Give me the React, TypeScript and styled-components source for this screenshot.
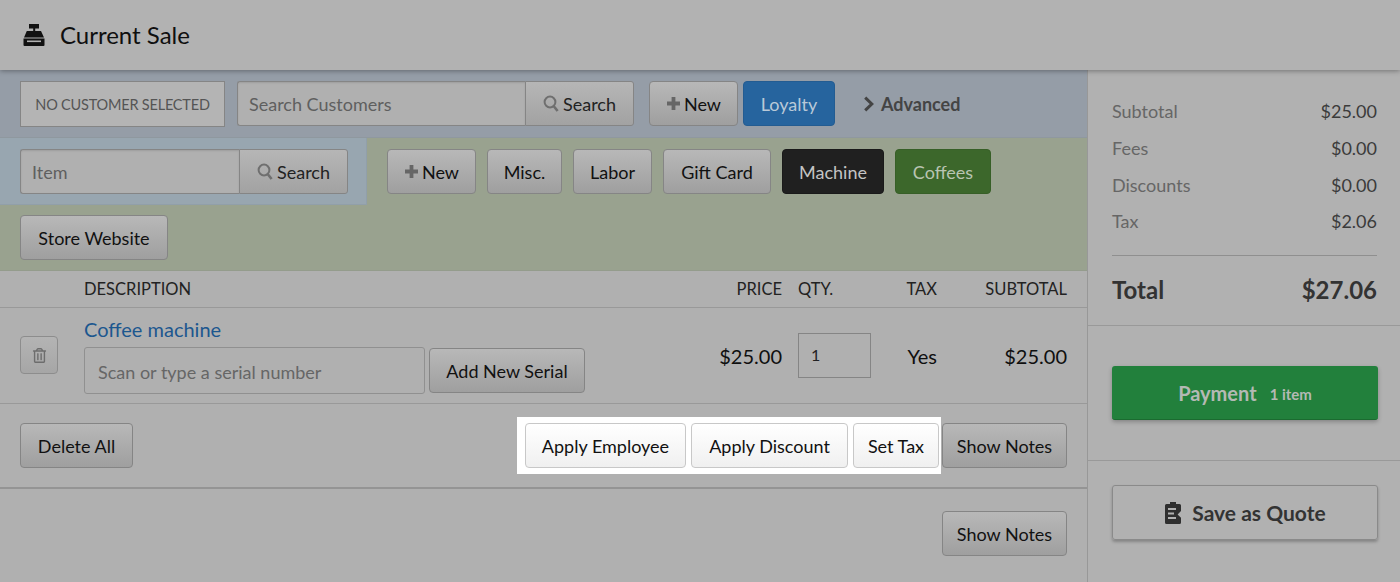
import { createGlobalStyle, css } from "styled-components";
import styled from "styled-components";
import { FaRegTrashAlt } from "react-icons/fa";

const GlobalStyle = createGlobalStyle`
    html, body {
        margin: 0;
        padding: 0;
        background: #b0b0b0;
    }
    body {
        font-family: Lato, "Liberation Sans", sans-serif;
        color: #111;
        overflow: hidden;
    }
    * {
        box-sizing: border-box;
    }
`;

const Page = styled.div`
    width: 1400px;
    height: 582px;
    display: flex;
    flex-direction: column;
    background: #b0b0b0;
    overflow: hidden;
`;

const Header = styled.header`
    position: relative;
    z-index: 2;
    height: 70px;
    flex: none;
    display: flex;
    align-items: center;
    gap: 14px;
    padding: 0 22px 1px;
    background: #b2b2b2;
    box-shadow: 0 1px 5px rgba(0, 0, 0, 0.35);
`;

const Title = styled.h1`
    margin: 0;
    font-size: 24px;
    font-weight: 400;
    color: #0f0f0f;
`;

const Body = styled.div`
    flex: 1;
    display: flex;
    min-height: 0;
`;

const Main = styled.main`
    width: 1088px;
    flex: none;
    border-right: 1px solid #989898;
`;

const CustomerBar = styled.div`
    height: 68px;
    display: flex;
    align-items: flex-start;
    padding: 11px 20px 0;
    background: #959da7;
    border-bottom: 1px solid #8f989f;
`;

const NoCustomer = styled.div`
    width: 205px;
    height: 46px;
    margin-right: 12px;
    display: flex;
    align-items: center;
    justify-content: center;
    font-size: 14.5px;
    color: #555;
    background: #b4b4b4;
    border: 1px solid #858585;
    letter-spacing: -0.2px;
`;

const SearchGroup = styled.div<{ $width: number }>`
    width: ${(p) => p.$width}px;
    height: 45px;
    flex: none;
    display: flex;
`;

const GroupInput = styled.div`
    flex: 1;
    display: flex;
    align-items: center;
    padding-left: 11px;
    font-size: 18px;
    color: #5f5f5f;
    background: #b0b0b0;
    border: 1px solid #858585;
    border-right: 0;
    border-radius: 3px 0 0 3px;
    box-shadow: inset 0 1px 2px rgba(0, 0, 0, 0.1);
`;

const GroupButton = styled.div`
    width: 109px;
    flex: none;
    display: flex;
    align-items: center;
    justify-content: center;
    gap: 4px;
    font-size: 18px;
    color: #222;
    background: linear-gradient(#b6b6b6, #a2a2a2);
    border: 1px solid #858585;
    border-radius: 0 3px 3px 0;
`;

const toneStyles = {
    plain: css`
        color: #111;
        background: linear-gradient(#b8b8b8, #9f9f9f);
        border-color: #858585;
    `,
    light: css`
        color: #111;
        background: linear-gradient(#fff, #f0f0f0);
        border-color: #c8c8c8;
    `,
    blue: css`
        color: #b9c9d8;
        background: #26649e;
        border-color: #235c92;
    `,
    black: css`
        color: #c4c4c4;
        background: #202020;
        border-color: #1a1a1a;
    `,
    green: css`
        color: #b9c4b2;
        background: #3c672b;
        border-color: #375f27;
    `,
};

const Button = styled.div<{
    $width: number;
    $tone?: keyof typeof toneStyles;
    $left?: number;
}>`
    width: ${(p) => p.$width}px;
    height: 45px;
    flex: none;
    margin-left: ${(p) => p.$left ?? 0}px;
    display: flex;
    align-items: center;
    justify-content: center;
    gap: 3px;
    font-size: 18px;
    border: 1px solid;
    border-radius: 4px;
    ${(p) => toneStyles[p.$tone ?? "plain"]}
`;

const Advanced = styled.div`
    height: 45px;
    margin-left: 28px;
    display: flex;
    align-items: center;
    gap: 6px;
    font-size: 18px;
    font-weight: 700;
    color: #444;
`;

const ItemArea = styled.div`
    height: 133px;
    background: #99a28f;
    border-bottom: 1px solid #949c8c;
`;

const ItemRow = styled.div`
    display: flex;
    align-items: flex-start;
`;

const ItemSearch = styled.div`
    width: 367px;
    height: 67px;
    flex: none;
    padding: 11px 19px 0 20px;
    background: #98a6b0;
    border-right: 1px solid #919fa9;
    border-bottom: 1px solid #919fa9;
`;

const ItemButtons = styled.div`
    display: flex;
    gap: 11px;
    padding: 11px 0 0 20px;
`;

const ExtraRow = styled.div`
    padding: 10px 20px 0;
`;

const tableColumns = css`
    display: grid;
    grid-template-columns: 64px 598px 100px 113px 42px 130px;
    padding: 0 20px;
`;

const TableHead = styled.div`
    ${tableColumns}
    height: 37px;
    align-items: center;
    font-size: 16.5px;
    color: #222;
    border-bottom: 1px solid #999;
`;

const ColDescription = styled.div`
    grid-column: 2;
`;

const ColRight = styled.div`
    text-align: right;
`;

const ColQty = styled.div`
    padding-left: 16px;
`;

const TableRow = styled.div`
    ${tableColumns}
    height: 96px;
    align-items: center;
    font-size: 20px;
    color: #0f0f0f;
    border-bottom: 1px solid #999;
`;

const TrashButton = styled.div`
    width: 38px;
    height: 38px;
    margin-top: -1px;
    display: flex;
    align-items: center;
    justify-content: center;
    color: #6d6d6d;
    font-size: 15px;
    background: linear-gradient(#b4b4b4, #a6a6a6);
    border: 1px solid #8d8d8d;
    border-radius: 4px;
`;

const ItemName = styled.a`
    display: block;
    margin-bottom: 6px;
    font-size: 20px;
    line-height: 24px;
    color: #1c578f;
`;

const SerialRow = styled.div`
    display: flex;
    align-items: center;
    gap: 4px;
`;

const SerialInput = styled.div`
    width: 341px;
    height: 47px;
    display: flex;
    align-items: center;
    padding: 3px 0 0 13px;
    font-size: 18px;
    color: #666;
    background: #b0b0b0;
    border: 1px solid #909090;
    border-radius: 3px;
`;

const QtyInput = styled.div`
    width: 73px;
    height: 45px;
    margin-left: 16px;
    display: flex;
    align-items: center;
    padding: 0 0 2px 12px;
    font-size: 16px;
    color: #222;
    border: 1px solid #858585;
`;

const Actions = styled.div`
    height: 85px;
    display: flex;
    align-items: center;
    justify-content: space-between;
    padding: 0 20px;
    border-bottom: 2px solid #949494;
`;

const ActionsRight = styled.div`
    display: flex;
    align-items: center;
`;

const Highlight = styled.div`
    display: flex;
    gap: 5px;
    padding: 6px 2px 6px 8px;
    margin-right: 1px;
    background: #fff;
`;

const NotesRow = styled.div`
    display: flex;
    justify-content: flex-end;
    padding: 22px 20px 0;
`;

const Sidebar = styled.aside`
    flex: 1;
    display: flex;
    flex-direction: column;
    background: #b1b1b1;
`;

const Summary = styled.section`
    height: 256px;
    flex: none;
    padding: 23px 23px 0 24px;
    border-bottom: 1px solid #999;
`;

const SummaryRow = styled.div`
    height: 36.7px;
    display: flex;
    align-items: center;
    justify-content: space-between;
    font-size: 18px;
    color: #666;
`;

const SummaryValue = styled.span`
    color: #3b3b3b;
`;

const Rule = styled.hr`
    margin: 15px 0 16px;
    border: 0;
    border-top: 1px solid #8f8f8f;
`;

const TotalRow = styled.div`
    display: flex;
    justify-content: space-between;
    font-size: 24px;
    line-height: 36px;
    font-weight: 700;
    color: #333;
`;

const PaymentSection = styled.section`
    height: 135px;
    flex: none;
    padding: 40px 22px 0 24px;
    border-bottom: 1px solid #999;
`;

const PaymentButton = styled.div`
    height: 54px;
    display: flex;
    align-items: center;
    justify-content: center;
    gap: 13px;
    font-size: 20px;
    font-weight: 700;
    color: #b4b9b4;
    background: #22803c;
    border-bottom: 1px solid #1b6b30;
    border-radius: 3px;
    box-shadow: 0 2px 4px rgba(0, 0, 0, 0.25);
`;

const PaymentCount = styled.span`
    padding-top: 3px;
    font-size: 15px;
`;

const QuoteSection = styled.section`
    padding: 24px 22px 0 24px;
`;

const QuoteButton = styled.div`
    height: 55px;
    display: flex;
    align-items: center;
    justify-content: center;
    gap: 10px;
    font-size: 21px;
    font-weight: 700;
    color: #333;
    border: 1px solid #8a8a8a;
    border-radius: 3px;
    box-shadow: 0 2px 3px rgba(0, 0, 0, 0.25);
`;

const SearchIcon = () => (
    <svg width="16" height="17" viewBox="0 0 16 17" fill="none" stroke="#6f6f6f">
        <circle cx="7" cy="7" r="5.4" strokeWidth="2" />
        <path d="M10.8 11.2 14.6 16" strokeWidth="2.6" />
    </svg>
);

const PlusIcon = () => (
    <svg width="15" height="15" viewBox="0 0 15 15" fill="#666">
        <path d="M5.6 1h3.8v4.6H14v3.8H9.4V14H5.6V9.4H1V5.6h4.6z" />
    </svg>
);

const ChevronIcon = () => (
    <svg width="12" height="16" viewBox="0 0 12 16" fill="none" stroke="#444">
        <path d="M2.2 1.6 8.8 8l-6.6 6.4" strokeWidth="3" />
    </svg>
);

const RegisterIcon = () => (
    <svg width="24" height="22" viewBox="0 0 24 22" fill="#111">
        <path d="M7 0h10v4.5h-3.8V7H19l3 6.5H2L4.8 7h6.4V4.5H7z" />
        <path d="M1.5 14.5h21V21a1 1 0 0 1-1 1h-19a1 1 0 0 1-1-1z" />
        <rect x="5" y="16.5" width="14" height="1.6" fill="#b2b2b2" />
    </svg>
);

const ClipboardIcon = () => (
    <svg width="18" height="22" viewBox="0 0 18 22" fill="#2f2f2f">
        <path d="M6 0h6v2h3.5A1.5 1.5 0 0 1 17 3.5V9l-3.4 3.4L17 15.8v4.7a1.5 1.5 0 0 1-1.5 1.5h-13A1.5 1.5 0 0 1 1 20.500v-17A1.500 1.500 0 0 1 2.500 2H6z" />
        <path d="M4 6h8v2H4zM4 10.500h6v2H4zM4 15h8v2H4z" fill="#b1b1b1" />
    </svg>
);

const App = () => {
    return (
        <Page>
            <GlobalStyle />
            <Header>
                <RegisterIcon />
                <Title>Current Sale</Title>
            </Header>
            <Body>
                <Main>
                    <CustomerBar>
                        <NoCustomer>NO CUSTOMER SELECTED</NoCustomer>
                        <SearchGroup $width={397}>
                            <GroupInput>Search Customers</GroupInput>
                            <GroupButton>
                                <SearchIcon />
                                Search
                            </GroupButton>
                        </SearchGroup>
                        <Button $width={89} $left={15}>
                            <PlusIcon />
                            New
                        </Button>
                        <Button $width={92} $left={5} $tone="blue">
                            Loyalty
                        </Button>
                        <Advanced>
                            <ChevronIcon />
                            Advanced
                        </Advanced>
                    </CustomerBar>

                    <ItemArea>
                        <ItemRow>
                            <ItemSearch>
                                <SearchGroup $width={328}>
                                    <GroupInput>Item</GroupInput>
                                    <GroupButton>
                                        <SearchIcon />
                                        Search
                                    </GroupButton>
                                </SearchGroup>
                            </ItemSearch>
                            <ItemButtons>
                                <Button $width={89}>
                                    <PlusIcon />
                                    New
                                </Button>
                                <Button $width={75}>Misc.</Button>
                                <Button $width={79}>Labor</Button>
                                <Button $width={108}>Gift Card</Button>
                                <Button $width={102} $tone="black">
                                    Machine
                                </Button>
                                <Button $width={96} $tone="green">
                                    Coffees
                                </Button>
                            </ItemButtons>
                        </ItemRow>
                        <ExtraRow>
                            <Button $width={148}>Store Website</Button>
                        </ExtraRow>
                    </ItemArea>

                    <TableHead>
                        <ColDescription>DESCRIPTION</ColDescription>
                        <ColRight>PRICE</ColRight>
                        <ColQty>QTY.</ColQty>
                        <ColRight>TAX</ColRight>
                        <ColRight>SUBTOTAL</ColRight>
                    </TableHead>

                    <TableRow>
                        <TrashButton>
                            <FaRegTrashAlt />
                        </TrashButton>
                        <div>
                            <ItemName>Coffee machine</ItemName>
                            <SerialRow>
                                <SerialInput>Scan or type a serial number</SerialInput>
                                <Button $width={156}>Add New Serial</Button>
                            </SerialRow>
                        </div>
                        <ColRight>$25.00</ColRight>
                        <QtyInput>1</QtyInput>
                        <ColRight>Yes</ColRight>
                        <ColRight>$25.00</ColRight>
                    </TableRow>

                    <Actions>
                        <Button $width={113}>Delete All</Button>
                        <ActionsRight>
                            <Highlight>
                                <Button $width={161} $tone="light">
                                    Apply Employee
                                </Button>
                                <Button $width={157} $tone="light">
                                    Apply Discount
                                </Button>
                                <Button $width={86} $tone="light">
                                    Set Tax
                                </Button>
                            </Highlight>
                            <Button $width={125}>Show Notes</Button>
                        </ActionsRight>
                    </Actions>

                    <NotesRow>
                        <Button $width={125}>Show Notes</Button>
                    </NotesRow>
                </Main>

                <Sidebar>
                    <Summary>
                        <SummaryRow>
                            Subtotal
                            <SummaryValue>$25.00</SummaryValue>
                        </SummaryRow>
                        <SummaryRow>
                            Fees
                            <SummaryValue>$0.00</SummaryValue>
                        </SummaryRow>
                        <SummaryRow>
                            Discounts
                            <SummaryValue>$0.00</SummaryValue>
                        </SummaryRow>
                        <SummaryRow>
                            Tax
                            <SummaryValue>$2.06</SummaryValue>
                        </SummaryRow>
                        <Rule />
                        <TotalRow>
                            Total
                            <span>$27.06</span>
                        </TotalRow>
                    </Summary>
                    <PaymentSection>
                        <PaymentButton>
                            Payment
                            <PaymentCount>1 item</PaymentCount>
                        </PaymentButton>
                    </PaymentSection>
                    <QuoteSection>
                        <QuoteButton>
                            <ClipboardIcon />
                            Save as Quote
                        </QuoteButton>
                    </QuoteSection>
                </Sidebar>
            </Body>
        </Page>
    );
};

export default App;
